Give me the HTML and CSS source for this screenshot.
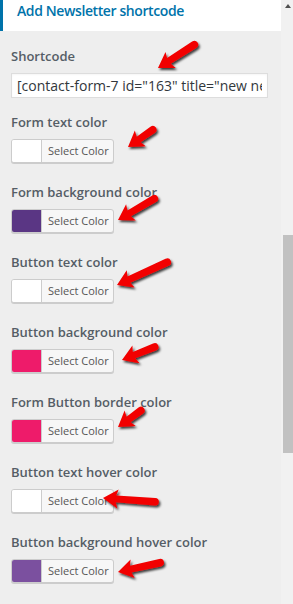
FILE: index.html
```html
<!DOCTYPE html>
<html lang="en">
<head>
<meta charset="utf-8">
<title>Add Newsletter shortcode</title>
<link rel="stylesheet" href="styles.css">
</head>
<body>
<div class="frame">
  <div class="panel">
    <div class="section-head">Add Newsletter shortcode</div>
    <div class="controls">
      <div class="control control--text">
        <label class="title" for="sc">Shortcode</label>
        <input id="sc" class="text-input" type="text" value='[contact-form-7 id="163" title="new newsletter"]'>
      </div>
      <div class="control">
        <span class="title">Form text color</span>
        <button class="color-btn" type="button"><span class="swatch swatch--white"></span><span class="btn-label">Select Color</span></button>
      </div>
      <div class="control">
        <span class="title">Form background color</span>
        <button class="color-btn" type="button"><span class="swatch swatch--purple"></span><span class="btn-label">Select Color</span></button>
      </div>
      <div class="control">
        <span class="title">Button text color</span>
        <button class="color-btn" type="button"><span class="swatch swatch--white"></span><span class="btn-label">Select Color</span></button>
      </div>
      <div class="control">
        <span class="title">Button background color</span>
        <button class="color-btn" type="button"><span class="swatch swatch--pink"></span><span class="btn-label">Select Color</span></button>
      </div>
      <div class="control">
        <span class="title">Form Button border color</span>
        <button class="color-btn" type="button"><span class="swatch swatch--pink"></span><span class="btn-label">Select Color</span></button>
      </div>
      <div class="control">
        <span class="title">Button text hover color</span>
        <button class="color-btn" type="button"><span class="swatch swatch--white"></span><span class="btn-label">Select Color</span></button>
      </div>
      <div class="control">
        <span class="title">Button background hover color</span>
        <button class="color-btn" type="button"><span class="swatch swatch--violet"></span><span class="btn-label">Select Color</span></button>
      </div>
    </div>
  </div>
  <div class="scrollbar">
    <span class="scroll-up"></span>
    <div class="scroll-thumb"></div>
  </div>
  <svg class="arrows" width="293" height="604" viewBox="0 0 293 604" aria-hidden="true">
    <defs>
      <filter id="sh" x="-30%" y="-60%" width="160%" height="220%">
        <feDropShadow dx="1.5" dy="2" stdDeviation="1.2" flood-color="#000" flood-opacity="0.75"/>
      </filter>
    </defs>
    <g fill="#f20000" filter="url(#sh)">
      <path transform="translate(158 68) rotate(-32.7)" d="M0 0 L15 -9.5 L13 -3.4 L43 -3.8 Q47 -3.8 47 0 Q47 3.8 43 3.8 L13 3.4 L15 9.5 Z"/>
      <path transform="translate(128 147) rotate(-35)" d="M0 0 L15 -9.5 L13 -3.4 L30 -3.8 Q34 -3.8 34 0 Q34 3.8 30 3.8 L13 3.4 L15 9.5 Z"/>
      <path transform="translate(118 220) rotate(-30.5)" d="M0 0 L15 -9.5 L13 -3.4 L42 -3.8 Q46 -3.8 46 0 Q46 3.8 42 3.8 L13 3.4 L15 9.5 Z"/>
      <path transform="translate(117 285) rotate(-24.4)" d="M0 0 L15 -9.5 L13 -3.4 L55 -3.8 Q59 -3.8 59 0 Q59 3.8 55 3.8 L13 3.4 L15 9.5 Z"/>
      <path transform="translate(122 360) rotate(-21.8)" d="M0 0 L15 -9.5 L13 -3.4 L35 -3.8 Q39 -3.8 39 0 Q39 3.8 35 3.8 L13 3.4 L15 9.5 Z"/>
      <path transform="translate(118 427) rotate(-35.8)" d="M0 0 L15 -9.5 L13 -3.4 L28 -3.8 Q32 -3.8 32 0 Q32 3.8 28 3.8 L13 3.4 L15 9.5 Z"/>
      <path transform="translate(103 498) rotate(4.2)" d="M0 0 L15 -9.5 L13 -3.4 L52 -3.8 Q56 -3.8 56 0 Q56 3.8 52 3.8 L13 3.4 L15 9.5 Z"/>
      <path transform="translate(118 572) rotate(-12.5)" d="M0 0 L15 -9.5 L13 -3.4 L43 -3.8 Q47 -3.8 47 0 Q47 3.8 43 3.8 L13 3.4 L15 9.5 Z"/>
    </g>
  </svg>
</div>
</body>
</html>
```

FILE: styles.css
```css
* { box-sizing: border-box; }

html, body {
  margin: 0;
  padding: 0;
  background: #eeeeee;
}

body {
  font-family: "Open Sans", "Noto Sans", sans-serif;
  width: 293px;
  height: 604px;
  overflow: hidden;
}

.frame {
  position: relative;
  display: flex;
  width: 293px;
  height: 604px;
}

.panel {
  flex: 0 0 281px;
  background: #eeeeee;
}

.section-head {
  height: 31px;
  background: #ffffff;
  border-left: 3px solid #0073aa;
  padding: 1px 0 0 14px;
  color: #0073aa;
  font-size: 14px;
  font-weight: 600;
  letter-spacing: -0.4px;
  line-height: 20px;
  white-space: nowrap;
}

.controls {
  display: flex;
  flex-direction: column;
  padding: 15px 13px 0 11px;
}

.control {
  display: flex;
  flex-direction: column;
  align-items: flex-start;
  margin-bottom: 19px;
}

.control--text {
  margin-bottom: 14px;
}

.title {
  display: block;
  color: #555d66;
  font-size: 13px;
  font-weight: 600;
  line-height: 20px;
  margin-bottom: 7px;
  white-space: nowrap;
}

.text-input {
  width: 257px;
  height: 25px;
  border: 1px solid #dddddd;
  background: #ffffff;
  padding: 0 5px;
  margin: 0;
  color: #32373c;
  font-family: inherit;
  font-size: 14px;
  box-shadow: inset 0 1px 2px rgba(0,0,0,0.04);
  outline: none;
}

.color-btn {
  display: flex;
  align-items: stretch;
  width: 103px;
  height: 24px;
  padding: 0;
  margin: 0;
  border: 1px solid #cccccc;
  border-radius: 3px;
  background: #f7f7f7;
  box-shadow: 0 1px 0 #cccccc;
  overflow: hidden;
  font-family: inherit;
  cursor: pointer;
}

.swatch {
  flex: 0 0 30px;
  border-right: 1px solid #cccccc;
}

.swatch--white { background: #ffffff; }
.swatch--purple { background: #5a3684; }
.swatch--pink { background: #ee1b6a; }
.swatch--violet { background: #7b509f; }

.btn-label {
  flex: 1;
  display: flex;
  align-items: center;
  padding-left: 6px;
  color: #555555;
  font-size: 11px;
  line-height: 22px;
  white-space: nowrap;
}

.scrollbar {
  flex: 0 0 12px;
  background: #f1f1f1;
  display: flex;
  flex-direction: column;
  align-items: flex-end;
}

.scroll-up {
  display: block;
  width: 0;
  height: 0;
  margin: 4px 2px 0 0;
  border-left: 3.5px solid transparent;
  border-right: 3.5px solid transparent;
  border-bottom: 4px solid #505050;
}

.scroll-thumb {
  width: 10px;
  height: 218px;
  margin-top: 227px;
  background: #c1c1c1;
}

.arrows {
  position: absolute;
  left: 0;
  top: 0;
  pointer-events: none;
}
```
